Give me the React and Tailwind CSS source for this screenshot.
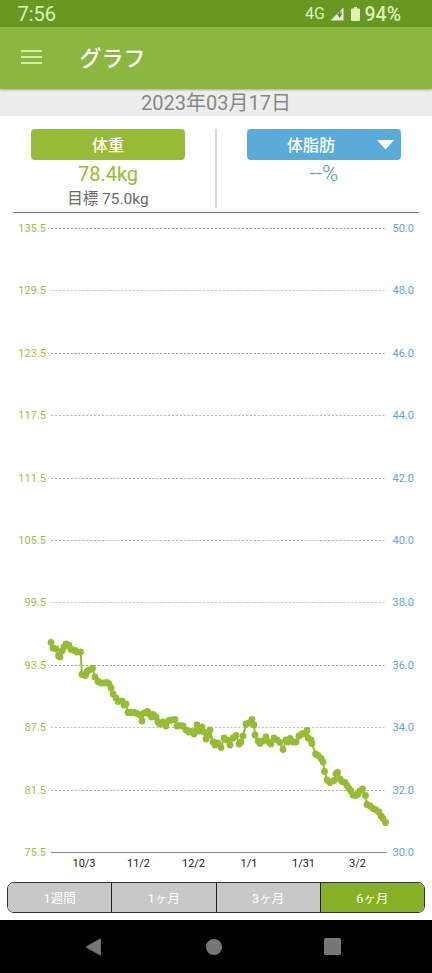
const LEFT_LABELS = ['135.5', '129.5', '123.5', '117.5', '111.5', '105.5', '99.5', '93.5', '87.5', '81.5', '75.5'];
const RIGHT_LABELS = ['50.0', '48.0', '46.0', '44.0', '42.0', '40.0', '38.0', '36.0', '34.0', '32.0', '30.0'];
const GRID_COLORS = ['#999', '#c4c4c4', '#999', '#b4b4b4', '#aaa', '#b4b4b4', '#c4c4c4', '#999', '#c4c4c4', '#aaa', '#888'];
const DATES = [
  ['10/3', 84],
  ['11/2', 138.5],
  ['12/2', 193.5],
  ['1/1', 249],
  ['1/31', 303.5],
  ['3/2', 357.5],
];
const POINTS = [
  [51, 642.5], [53, 648], [56, 649], [58.5, 656], [60, 657], [62, 651], [64, 647], [66, 644], [69, 645.5],
  [71, 649.5], [73, 650], [75, 650.5], [77, 652], [80.5, 652], [82, 674.5], [85.5, 675.5], [87, 671.5],
  [89, 670], [92.5, 668.5], [95, 677], [98, 681.5], [101, 683], [104, 683], [107, 682.5], [109, 684],
  [111, 688], [113, 694], [116, 698], [118, 701.5], [122, 701], [124, 705], [126, 704], [128, 712.5],
  [131, 712.5], [134, 712.5], [137, 713.5], [140, 715], [142, 721], [144, 713], [147.5, 711.5],
  [149, 714], [151.5, 717], [153, 714.5], [156, 717], [158, 722], [160, 724], [163, 722], [166, 726],
  [169, 720.5], [172, 720], [175, 719.5], [177, 726], [180, 725.5], [183, 726], [186, 730], [189, 732],
  [191, 731.5], [194, 734], [196, 731], [197, 725], [199, 731], [202, 727], [204, 732], [206, 739],
  [208, 736], [210, 730], [213, 742], [215, 745], [218, 743], [221, 747.5], [224, 738], [227, 740],
  [230, 745], [233, 738], [236, 735.5], [239, 744], [241, 742], [243, 736], [246, 724], [249, 723],
  [252, 719.5], [254, 725], [255, 735], [258, 741], [260, 743.5], [263, 741], [266, 737], [269, 742],
  [271, 744], [274, 738], [277, 740], [280, 742.5], [283, 749.5], [286, 740], [288, 742], [290, 738.5],
  [293, 742], [296, 742], [299, 736], [302, 734], [304, 733.5], [307, 730.5], [308, 738],
  [311, 740], [312, 743.5], [315.5, 754], [318, 755.5], [321, 758.5], [323, 762], [324.5, 771.5],
  [327, 780], [330, 782.5], [334, 780.5], [336, 774], [337.5, 772.5], [340, 779], [342, 781.5],
  [345, 782.5], [347, 785.5], [349, 788.5], [351, 791], [353, 795], [356, 795.5], [358, 794],
  [360, 791], [362.5, 789], [365.5, 795.5], [367, 804.5], [370, 806], [373, 808.5], [376, 810],
  [379, 812], [381, 816], [383, 818.5], [385.5, 822.5],
];

function StatusBar() {
  return (
    <div className="flex h-[27px] items-center bg-[#689722] pl-[17.5px] pr-[31px] text-[#dcf2b7]">
      <span className="mt-[1px] w-[60px] text-[20px] leading-[24px]">7:56</span>
      <span className="ml-auto mt-[1px] text-[16px] leading-[20px]">4G</span>
      <svg className="ml-[5px] mt-[1px]" width="14" height="14" viewBox="0 0 14 14">
        <path d="M13.5 0.5V13.5H0.5Z" fill="#e3edce" />
        <path d="M7 6.8H12.2L9.6 11Z" fill="#697b4b" />
        <path d="M9.6 2.5V8M11 4.5V7" stroke="#697b4b" fill="none" />
      </svg>
      <svg className="ml-[7px] mt-[1px]" width="9" height="14" viewBox="0 0 9 14">
        <path d="M3 0h3v1.6h2q1 0 1 1V13q0 1-1 1H1q-1 0-1-1V2.6q0-1 1-1h2z" fill="#dcf2b7" />
      </svg>
      <span className="ml-[4.5px] mt-[2px] text-[19.5px] font-medium leading-[24px]">94%</span>
    </div>
  );
}

function Header() {
  return (
    <header className="relative z-10 flex h-[62px] items-center bg-[#8ab641] pl-[20.5px] shadow-[0_1px_2px_rgba(0,0,0,0.3)]">
      <div className="flex w-[21px] -translate-y-[1px] flex-col gap-[4px]">
        <div className="h-[2px] bg-[#d3eda9]" />
        <div className="h-[2px] bg-[#d3eda9]" />
        <div className="h-[2px] bg-[#d3eda9]" />
      </div>
      <h1 className="ml-[38px] mt-[2px] text-[22px] font-medium leading-[30px] text-white">グラフ</h1>
    </header>
  );
}

function Summary() {
  return (
    <section className="mx-[13px] flex h-[97px] border-b border-[#777] pt-[13px]">
      <div className="flex w-[202px] flex-col items-center pr-[12px]">
        <div className="flex h-[31px] w-[154px] items-center justify-center rounded-[4px] bg-[#96bb37] pt-[2px] text-[16px] font-medium text-white">体重</div>
        <div className="mt-[2px] text-[20px] leading-[25px] text-[#96bb37]">78.4kg</div>
        <div className="text-[15.5px] leading-[24px] text-[#6a6a6a]">目標 75.0kg</div>
      </div>
      <div className="h-[79px] w-[2px] bg-[#d8d8d8]" />
      <div className="flex flex-1 flex-col items-center pl-[12px]">
        <div className="flex h-[31px] w-[154px] items-center rounded-[4px] bg-[#5babd9] pr-[7px] text-[16px] font-medium text-white">
          <span className="ml-[40px] mt-[2px]">体脂肪</span>
          <svg className="ml-auto" width="17" height="10" viewBox="0 0 17 10"><path d="M0 0H17L8.5 9.5Z" fill="white" /></svg>
        </div>
        <div className="mt-[1px] flex text-[22px] font-light leading-[25px] text-[#4694c1]">
          <span className="tracking-[-0.3px]">--</span>
          <span>%</span>
        </div>
      </div>
    </section>
  );
}

function Chart() {
  return (
    <svg className="block" width="432" height="669" viewBox="0 213 432 669" fontSize="11">
      {LEFT_LABELS.map((label, i) => {
        const y = 228.5 + i * 62.4;
        const last = i === LEFT_LABELS.length - 1;
        return (
          <g key={label}>
            <text x="46" y={y + 3.5} textAnchor="end" fill="#9dbf47">{label}</text>
            <line x1="51" x2="386.5" y1={Math.floor(y) + 0.5} y2={Math.floor(y) + 0.5} stroke={GRID_COLORS[i]} strokeDasharray={last ? undefined : '2.2 1.7'} />
            <text x="392.5" y={y + 3.5} fill="#5ba6cf">{RIGHT_LABELS[i]}</text>
          </g>
        );
      })}
      {DATES.map(([label, x]) => (
        <text key={label} x={x} y="867" textAnchor="middle" fill="#222">{label}</text>
      ))}
      <polyline points={POINTS.map((p) => p.join(',')).join(' ')} fill="none" stroke="#96bb37" strokeWidth="2" />
      {POINTS.map(([x, y]) => (
        <circle key={x} cx={x} cy={y} r="3.4" fill="#96bb37" />
      ))}
    </svg>
  );
}

function RangeTabs() {
  return (
    <div className="mx-[7px] flex h-[31px] overflow-hidden rounded-[7px] border border-[#333] text-[12.5px] leading-[31px] text-white">
      <div className="flex-1 border-r-[1.5px] border-[#222] bg-[#c8c8c8] text-center">1週間</div>
      <div className="flex-1 border-r-[1.5px] border-[#222] bg-[#c8c8c8] text-center">1ヶ月</div>
      <div className="flex-1 border-r-[1.5px] border-[#222] bg-[#c8c8c8] text-center">3ヶ月</div>
      <div className="flex-1 bg-[#87b125] text-center">6ヶ月</div>
    </div>
  );
}

function NavBar() {
  return (
    <nav className="mt-[7px] flex h-[53px] items-center bg-black pl-[86px]">
      <svg width="15" height="18" viewBox="0 0 15 18"><path d="M14.5 .8V17.2L.8 9.6Q0 9 .8 8.4Z" fill="#777" stroke="#777" strokeWidth=".8" strokeLinejoin="round" /></svg>
      <div className="ml-[105px] h-[16px] w-[16px] rounded-full bg-[#777]" />
      <div className="ml-[102px] h-[17px] w-[17px] rounded-[1.5px] bg-[#777]" />
    </nav>
  );
}

export default function App() {
  return (
    <div className="h-[973px] w-[432px] overflow-hidden bg-white font-[Roboto,'Noto_Sans_CJK_JP',sans-serif]">
      <StatusBar />
      <Header />
      <div className="flex h-[27px] items-center justify-center bg-[#ededed] pt-[1px] text-[20px] leading-[26px] text-[#888]">2023年03月17日</div>
      <Summary />
      <Chart />
      <RangeTabs />
      <NavBar />
    </div>
  );
}
